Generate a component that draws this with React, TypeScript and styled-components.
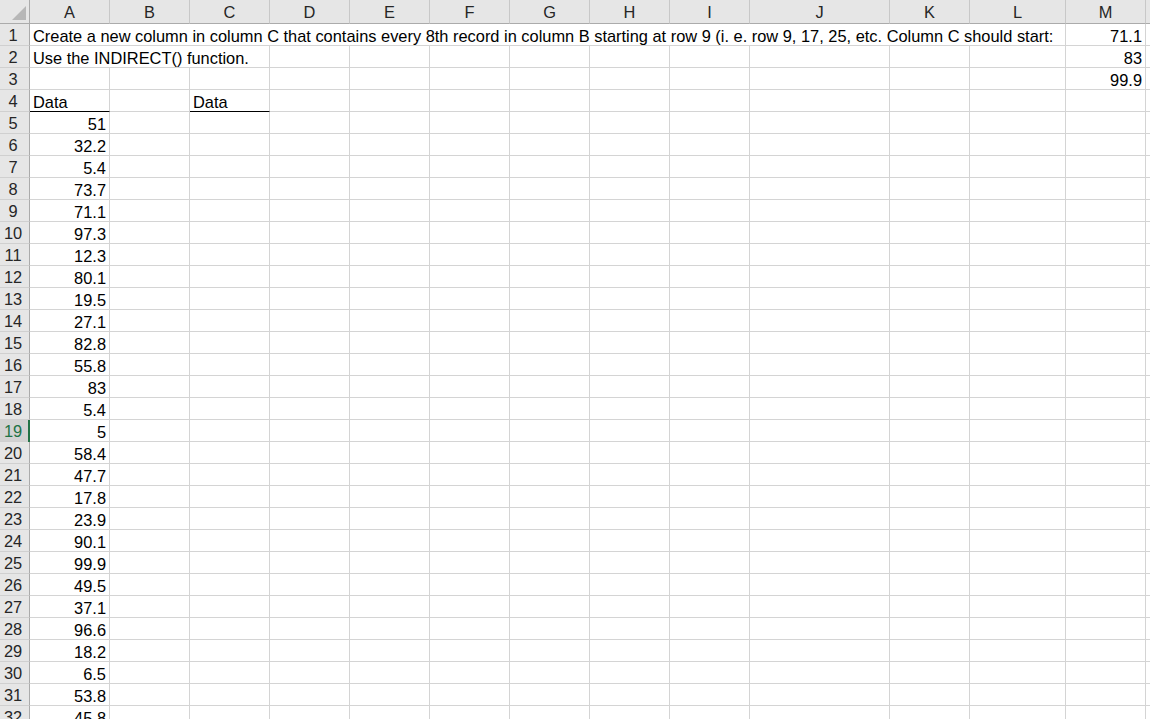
import React from "react";
import styled, { createGlobalStyle, css } from "styled-components";

const Global = createGlobalStyle`
  html, body { margin: 0; padding: 0; background: #fff; }
  body { overflow: hidden; }
  #root { width: 1150px; height: 719px; overflow: hidden; }
`;

const COLS: { name: string; width: number }[] = [
  { name: "A", width: 80 },
  { name: "B", width: 80 },
  { name: "C", width: 80 },
  { name: "D", width: 80 },
  { name: "E", width: 80 },
  { name: "F", width: 80 },
  { name: "G", width: 80 },
  { name: "H", width: 80 },
  { name: "I", width: 80 },
  { name: "J", width: 140 },
  { name: "K", width: 80 },
  { name: "L", width: 96 },
  { name: "M", width: 80 },
  { name: "N", width: 80 },
];

const DATA = [
  "51", "32.2", "5.4", "73.7", "71.1", "97.3", "12.3", "80.1", "19.5", "27.1",
  "82.8", "55.8", "83", "5.4", "5", "58.4", "47.7", "17.8", "23.9", "90.1",
  "99.9", "49.5", "37.1", "96.6", "18.2", "6.5", "53.8", "45.8", "61.2",
];

const Sheet = styled.div`
  display: grid;
  grid-template-columns: 30px ${COLS.map((c) => `${c.width}px`).join(" ")};
  grid-template-rows: 24px;
  grid-auto-rows: 22px;
  font-family: "Liberation Sans", Arial, sans-serif;
  font-size: 16.4px;
  color: #000;
  width: max-content;
`;

const Corner = styled.div`
  position: relative;
  background: #e6e6e6;
  border-right: 1px solid #ababab;
  border-bottom: 1px solid #ababab;
  box-sizing: border-box;
  &::after {
    content: "";
    position: absolute;
    right: 3px;
    bottom: 3px;
    width: 0;
    height: 0;
    border-left: 14px solid transparent;
    border-bottom: 14px solid #b7b7b7;
  }
`;

const ColHead = styled.div`
  background: #e6e6e6;
  border-right: 1px solid #c8c8c8;
  border-bottom: 1px solid #ababab;
  box-sizing: border-box;
  display: flex;
  align-items: center;
  justify-content: center;
  padding-top: 2px;
  color: #262626;
`;

const RowHead = styled.div<{ $active?: boolean }>`
  position: relative;
  background: ${(p) => (p.$active ? "#d2d2d2" : "#e6e6e6")};
  color: ${(p) => (p.$active ? "#217346" : "#262626")};
  border-right: 1px solid #ababab;
  border-bottom: 1px solid #d0d0d0;
  box-sizing: border-box;
  display: flex;
  align-items: center;
  justify-content: center;
  padding-right: 3px;
  padding-top: 2px;
  ${(p) =>
    p.$active &&
    css`
      &::after {
        content: "";
        position: absolute;
        right: -1px;
        top: 0;
        bottom: -1px;
        width: 2px;
        background: #217346;
      }
    `}
`;

const Cell = styled.div<{ $span?: number; $align?: "left" | "right"; $underline?: boolean }>`
  grid-column: span ${(p) => p.$span ?? 1};
  border-right: 1px solid #d4d4d4;
  border-bottom: 1px solid ${(p) => (p.$underline ? "#000" : "#d4d4d4")};
  box-sizing: border-box;
  display: flex;
  align-items: flex-end;
  justify-content: ${(p) => (p.$align === "right" ? "flex-end" : "flex-start")};
  padding: 0 3px 0 3px;
  white-space: nowrap;
  overflow: hidden;
  line-height: 17px;
`;

type CellSpec = { text?: string; span?: number; align?: "left" | "right"; underline?: boolean };

function buildRow(r: number): CellSpec[] {
  const M = (t?: string): CellSpec => ({ text: t, align: "right" });
  const blanks = (n: number): CellSpec[] => Array.from({ length: n }, () => ({}));
  if (r === 1)
    return [
      {
        text:
          "Create a new column in column C that contains every 8th record in column B starting at row 9 (i. e. row 9, 17, 25, etc. Column C should start:",
        span: 12,
      },
      M("71.1"),
      {},
    ];
  if (r === 2)
    return [{ text: "Use the INDIRECT() function.", span: 3 }, ...blanks(9), M("83"), {}];
  if (r === 3) return [...blanks(12), M("99.9"), {}];
  if (r === 4)
    return [
      { text: "Data", underline: true },
      {},
      { text: "Data", underline: true },
      ...blanks(11),
    ];
  return [{ text: DATA[r - 5], align: "right" }, ...blanks(13)];
}

const ROWS = Array.from({ length: 33 }, (_, i) => i + 1);

export default function App() {
  return (
    <>
      <Global />
      <Sheet>
        <Corner />
        {COLS.map((c) => (
          <ColHead key={c.name}>{c.name}</ColHead>
        ))}
        {ROWS.map((r) => (
          <React.Fragment key={r}>
            <RowHead $active={r === 19}>{r}</RowHead>
            {buildRow(r).map((c, i) => (
              <Cell key={i} $span={c.span} $align={c.align} $underline={c.underline}>
                {c.text}
              </Cell>
            ))}
          </React.Fragment>
        ))}
      </Sheet>
    </>
  );
}
